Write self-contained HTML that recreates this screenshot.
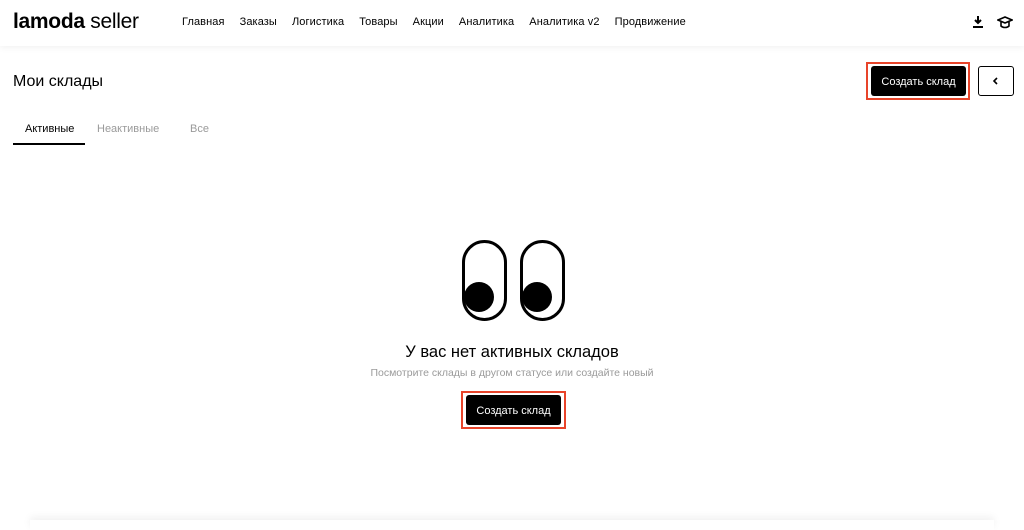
<!DOCTYPE html>
<html><head><meta charset="utf-8"><style>
*{margin:0;padding:0;box-sizing:border-box}
body{width:1024px;height:522px;background:#fff;font-family:"Liberation Sans",sans-serif;color:#000;position:relative;overflow:hidden}
.hdr{height:46px;box-shadow:0 2px 6px rgba(0,0,0,.05);position:relative}
.logo{position:absolute;left:13px;top:10px;font-size:21px;letter-spacing:-0.3px}
.logo b{font-weight:700}
.nav{position:absolute;left:182px;top:16px;font-size:11px;letter-spacing:0.1px}
.nav span{margin-right:15px}
.t{position:absolute;left:13px;top:73px;font-size:16px}
.tabs{position:absolute;left:13px;top:123px;font-size:11px;color:#9a9a9a}
.tab{position:absolute;white-space:nowrap}
.btn{position:absolute;background:#000;color:#fff;font-size:11px;border-radius:3px;display:flex;align-items:center;justify-content:center}
.red{position:absolute;border:2px solid #e8442a}
</style></head><body>
<div class="hdr">
<div class="logo"><b>lamoda</b> seller</div>
<div class="nav"><span>Главная</span><span>Заказы</span><span>Логистика</span><span>Товары</span><span>Акции</span><span>Аналитика</span><span>Аналитика v2</span><span>Продвижение</span></div>
<svg style="position:absolute;left:971px;top:15px" width="14" height="14" viewBox="0 0 14 14"><path d="M7 1v7M4 5l3 3 3-3M2 12h10" stroke="#000" stroke-width="2" fill="none"/></svg>
<svg style="position:absolute;left:997px;top:15px" width="16" height="14" viewBox="0 0 16 14"><path d="M1 5l7-3 7 3-7 3zM4 7v4c2 2 6 2 8 0V7" stroke="#000" stroke-width="1.6" fill="none"/></svg>
</div>
<div class="t">Мои склады</div>
<div class="tabs">
<div class="tab" style="left:12px;color:#000">Активные</div>
<div class="tab" style="left:84px">Неактивные</div>
<div class="tab" style="left:177px">Все</div>
</div>
<div style="position:absolute;left:13px;top:143px;width:72px;height:2px;background:#000"></div>
<div class="red" style="left:866px;top:62px;width:104px;height:38px"></div>
<div class="btn" style="left:871px;top:66px;width:95px;height:30px;padding-top:2px">Создать склад</div>
<div style="position:absolute;left:978px;top:66px;width:36px;height:30px;border:1px solid #000;border-radius:3px"></div>
<svg style="position:absolute;left:992px;top:77px" width="8" height="8" viewBox="0 0 8 8"><path d="M5 1L2 4l3 3" stroke="#000" stroke-width="1.6" fill="none"/></svg>
<svg style="position:absolute;left:460px;top:238px" width="108" height="86" viewBox="0 0 108 86">
<rect x="3.5" y="3.5" width="42" height="78" rx="21" fill="none" stroke="#000" stroke-width="3"/>
<rect x="61.5" y="3.5" width="42" height="78" rx="21" fill="none" stroke="#000" stroke-width="3"/>
<circle cx="19" cy="59" r="15" fill="#000"/><circle cx="77" cy="59" r="15" fill="#000"/>
</svg>
<div style="position:absolute;left:0;width:1024px;top:343px;text-align:center;font-size:16.5px">У вас нет активных складов</div>
<div style="position:absolute;left:0;width:1024px;top:367px;text-align:center;font-size:10.5px;color:#9a9a9a">Посмотрите склады в другом статусе или создайте новый</div>
<div class="red" style="left:461px;top:391px;width:105px;height:38px"></div>
<div class="btn" style="left:466px;top:395px;width:95px;height:30px;padding-top:2px">Создать склад</div>
<div style="position:absolute;left:30px;right:30px;top:520px;height:10px;box-shadow:0 -3px 8px rgba(0,0,0,.06)"></div>
</body></html>
